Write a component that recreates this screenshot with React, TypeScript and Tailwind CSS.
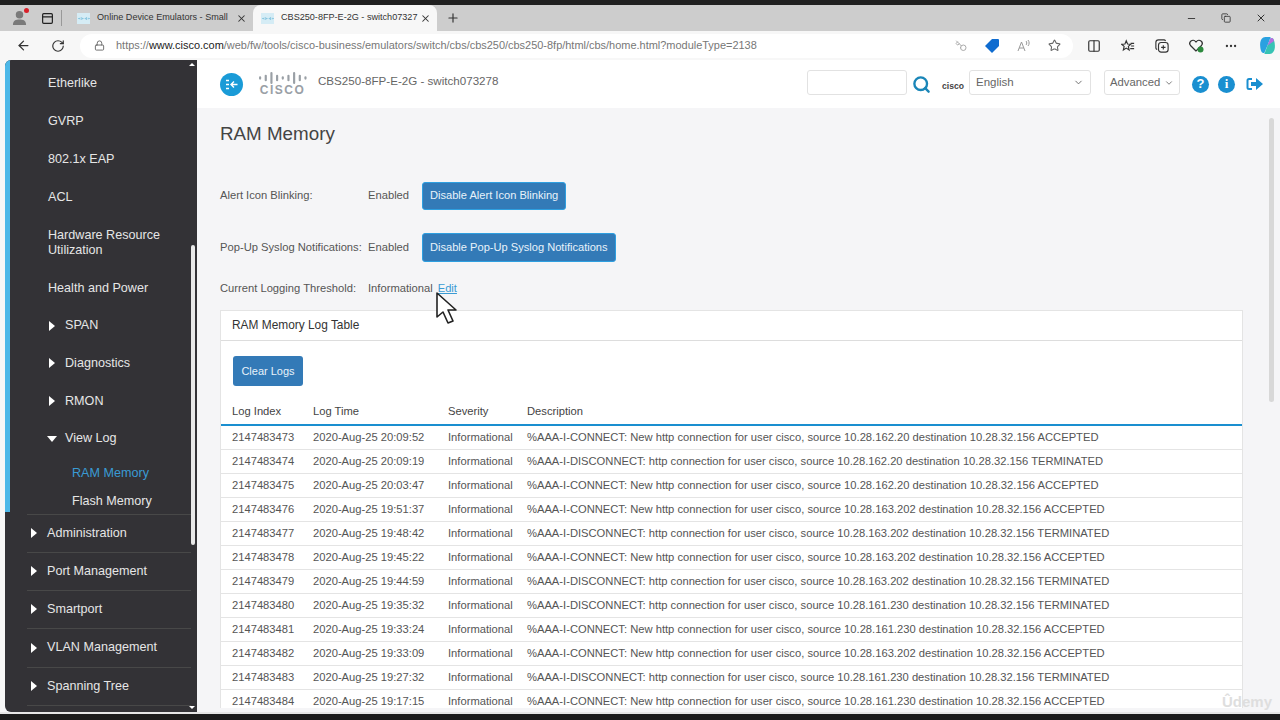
import React from "react";
import { ArrowLeft, RotateCw, Lock, X, Plus, Minus, Key, Star, Search, ChevronDown, MoreHorizontal, Columns2, PanelTop, Copy } from "lucide-react";

const rows = [
  ["2147483473","2020-Aug-25 20:09:52","%AAA-I-CONNECT: New http connection for user cisco, source 10.28.162.20 destination 10.28.32.156 ACCEPTED"],
  ["2147483474","2020-Aug-25 20:09:19","%AAA-I-DISCONNECT: http connection for user cisco, source 10.28.162.20 destination 10.28.32.156 TERMINATED"],
  ["2147483475","2020-Aug-25 20:03:47","%AAA-I-CONNECT: New http connection for user cisco, source 10.28.162.20 destination 10.28.32.156 ACCEPTED"],
  ["2147483476","2020-Aug-25 19:51:37","%AAA-I-CONNECT: New http connection for user cisco, source 10.28.163.202 destination 10.28.32.156 ACCEPTED"],
  ["2147483477","2020-Aug-25 19:48:42","%AAA-I-DISCONNECT: http connection for user cisco, source 10.28.163.202 destination 10.28.32.156 TERMINATED"],
  ["2147483478","2020-Aug-25 19:45:22","%AAA-I-CONNECT: New http connection for user cisco, source 10.28.163.202 destination 10.28.32.156 ACCEPTED"],
  ["2147483479","2020-Aug-25 19:44:59","%AAA-I-DISCONNECT: http connection for user cisco, source 10.28.163.202 destination 10.28.32.156 TERMINATED"],
  ["2147483480","2020-Aug-25 19:35:32","%AAA-I-DISCONNECT: http connection for user cisco, source 10.28.161.230 destination 10.28.32.156 TERMINATED"],
  ["2147483481","2020-Aug-25 19:33:24","%AAA-I-CONNECT: New http connection for user cisco, source 10.28.161.230 destination 10.28.32.156 ACCEPTED"],
  ["2147483482","2020-Aug-25 19:33:09","%AAA-I-CONNECT: New http connection for user cisco, source 10.28.163.202 destination 10.28.32.156 ACCEPTED"],
  ["2147483483","2020-Aug-25 19:27:32","%AAA-I-DISCONNECT: http connection for user cisco, source 10.28.161.230 destination 10.28.32.156 TERMINATED"],
  ["2147483484","2020-Aug-25 19:17:15","%AAA-I-CONNECT: New http connection for user cisco, source 10.28.161.230 destination 10.28.32.156 ACCEPTED"],
];

function Caret({ open }: { open?: boolean }) {
  return (
    <svg width="10" height="12" viewBox="0 0 10 12" className="shrink-0" fill="#fff">
      {open ? <path d="M0 3h10L5 9z" /> : <path d="M2 1l6 5-6 5z" />}
    </svg>
  );
}

function CiscoBars({ color, w }: { color: string; w: number }) {
  const hs = [3, 6, 11, 6, 3, 6, 11, 6, 3];
  return (
    <svg width={w} height={w / 4} viewBox="0 0 44 11" fill={color}>
      {hs.map((h, i) => (
        <rect key={i} x={i * 5.2} y={(11 - h) / 2} width="2" height={h} rx="1" />
      ))}
    </svg>
  );
}

function Tab({ title, active }: { title: string; active?: boolean }) {
  return (
    <div className={`flex items-center h-[26px] w-[184px] pl-[8px] pr-[6px] gap-[7px] rounded-t-[8px] ${active ? "bg-[#f7f7f7]" : ""}`}>
      <div className="w-[13px] h-[11px] bg-[#d5ecf5] flex items-center justify-center shrink-0"><CiscoBars color="#49a6cd" w={12} /></div>
      <span className="text-[9.1px] text-[#333] whitespace-nowrap flex-1 min-w-0">{title}</span>
      <X size={11} strokeWidth={2.2} className="text-[#333] shrink-0" />
    </div>
  );
}

function Nav({ label, indent, caret, open, divider, h = 37.7 }: { label: string; indent?: boolean; caret?: boolean; open?: boolean; divider?: boolean; h?: number }) {
  return (
    <div className={`flex items-center text-[12.6px] text-[#e6e6e6] ${divider ? "border-b border-[#484848] ml-[17px] mr-[6px]" : ""}`} style={{ height: h }}>
      {caret ? (
        <div className={`flex items-center gap-[8px] ${indent ? "pl-[37px]" : "pl-[2px]"}`}>
          <Caret open={open} />
          <span>{label}</span>
        </div>
      ) : (
        <span className="pl-[38px] leading-[15px]">{label}</span>
      )}
    </div>
  );
}

function Btn({ children, h }: { children: React.ReactNode; h: string }) {
  return (
    <button className={`${h} mt-[1px] px-[7px] pb-[1px] bg-[#337ab7] border border-[#2e9fe0] rounded-[3px] text-[#e8f2fa] text-[11.1px] whitespace-nowrap`}>{children}</button>
  );
}

export default function App() {
  return (
    <div className="w-[1280px] h-[720px] overflow-hidden flex flex-col bg-[#1c1c1c] font-['Liberation_Sans',sans-serif]">
      <div className="h-[5px] shrink-0 bg-[#202020]" />
      {/* tab strip */}
      <div className="h-[26px] shrink-0 bg-[#cdcdcd] flex items-center">
        <div className="w-[38px] flex justify-center relative pl-[0px]">
          <svg width="15" height="16" viewBox="0 0 16 17" fill="#7a7a7a"><circle cx="8" cy="5" r="4" /><path d="M1 16c0-5 3-6 7-6s7 1 7 6z" /></svg>
          <span className="absolute right-[9px] top-[-2px] w-[5px] h-[5px] rounded-full bg-[#d9202a]" />
        </div>
        <PanelTop size={13} strokeWidth={2.2} className="text-[#222] ml-[3px]" />
        <div className="w-px h-[16px] bg-[#999] ml-[7px] mr-[7px]" />
        <Tab title="Online Device Emulators - Small" />
        <Tab title="CBS250-8FP-E-2G - switch07327" active />
        <Plus size={14} className="text-[#333] ml-[9px]" />
        <div className="ml-auto flex items-center gap-[24px] pr-[13px] text-[#333]">
          <Minus size={11} />
          <Copy size={10} />
          <X size={12} />
        </div>
      </div>
      {/* address bar */}
      <div className="h-[29px] shrink-0 bg-[#f7f7f7] flex items-center">
        <ArrowLeft size={15} className="ml-[16px] text-[#333]" />
        <RotateCw size={14} className="ml-[20px] text-[#333]" />
        <div className="ml-[15px] w-[993px] h-[24px] bg-white rounded-full flex items-center pl-[14px]">
          <Lock size={11} className="text-[#666]" />
          <span className="ml-[11px] text-[10.96px] text-[#777] whitespace-nowrap">https://<span className="text-[#222]">www.cisco.com</span>/web/fw/tools/cisco-business/emulators/switch/cbs/cbs250/cbs250-8fp/html/cbs/home.html?moduleType=2138</span>
          <div className="ml-auto flex items-center gap-[18px] pr-[12px]">
            <Key size={12} className="text-[#aaa] -scale-x-100" />
            <svg width="14" height="14" viewBox="0 0 14 14" fill="#0f6cd0"><path d="M7 0h6a1 1 0 011 1v6l-7 7-7-7z" /></svg>
            <svg width="13" height="13" viewBox="0 0 13 13" fill="none" stroke="#999" strokeWidth="1"><path d="M1 12l3.5-9L8 12M2.2 9h4.6M9 2c1 1 1 3 0 4M11 1c1.5 2 1.5 4 0 6" /></svg>
            <Star size={13} className="text-[#666]" />
          </div>
        </div>
        <div className="flex items-center gap-[20px] ml-[14px] text-[#333]">
          <Columns2 size={14} />
          <svg width="14" height="14" viewBox="0 0 16 16" fill="none" stroke="#333" strokeWidth="1.3"><path d="M6 2l1.5 3.7 3.7.3-2.8 2.5.9 4L6 10.4 2.7 12.5l.9-4L.8 6l3.7-.3z" /><path d="M11 5h4M11.5 8H15M10.5 11H15" /></svg>
          <svg width="14" height="14" viewBox="0 0 16 16" fill="none" stroke="#333" strokeWidth="1.3"><rect x="4" y="4" width="11" height="11" rx="3" /><path d="M12 2.5A2 2 0 0010.5 1H4a3 3 0 00-3 3v6.5A2 2 0 002.5 12M9.5 7v5M7 9.5h5" /></svg>
          <svg width="15" height="15" viewBox="0 0 15 15"><path d="M7 13L1.5 7.5a3 3 0 015-4L7 4l.5-.5a3 3 0 015 4z" fill="none" stroke="#333" strokeWidth="1.2" /><circle cx="11.5" cy="11.5" r="3" fill="#2d8a3e" /></svg>
          <MoreHorizontal size={14} />
          <svg width="19" height="19" viewBox="0 0 18 18"><path d="M2 8c0-4 2-7 5-7h5l-3 8-3 7H5c-2 0-3-4-3-8z" fill="#2aa1e0" /><path d="M16 10c0 4-2 7-5 7H6l3-8 3-7h1c2 0 3 4 3 8z" fill="#37c3b4" /><path d="M9 9l3-7h1c1 0 2 1 2 3z" fill="#b66ee0" /></svg>
        </div>
      </div>
      {/* page */}
      <div className="h-[652px] shrink-0 bg-[#f7f7f7] pl-[5px]">
        <div className="h-[652px] bg-[#f5f5f7] flex overflow-hidden rounded-tl-[6px] relative">
          {/* sidebar */}
          <div className="w-[192px] shrink-0 bg-[#333236] flex relative rounded-bl-[6px]">
            <div className="w-[5px] h-[452px] bg-[#4db8e8]" />
            <div className="flex-1 flex flex-col pt-[5px] min-w-0">
              <Nav label="Etherlike" />
              <Nav label="GVRP" />
              <Nav label="802.1x EAP" h={38} />
              <Nav label="ACL" h={38} />
              <div className="h-[53px] flex items-center text-[12.6px] text-[#e6e6e6]"><span className="pl-[38px] leading-[15px]">Hardware Resource<br />Utilization</span></div>
              <Nav label="Health and Power" h={37.5} />
              <Nav label="SPAN" caret indent />
              <Nav label="Diagnostics" caret indent />
              <Nav label="RMON" caret indent />
              <Nav label="View Log" caret indent open />
              <div className="h-[32px] flex items-center pl-[62px] text-[12.6px] text-[#3a9bd4]">RAM Memory</div>
              <div className="h-[25px] flex items-center pl-[45px] ml-[17px] text-[12.6px] text-[#e6e6e6] border-b border-[#484848] mr-[6px]">Flash Memory</div>
              <Nav label="Administration" caret divider h={38} />
              <Nav label="Port Management" caret divider h={38} />
              <Nav label="Smartport" caret divider h={38.5} />
              <Nav label="VLAN Management" caret divider h={38.5} />
              <Nav label="Spanning Tree" caret divider h={38.5} />
            </div>
            <div className="absolute right-[2px] top-[185px] w-[4px] h-[300px] bg-[#e8e8e8] rounded-full" />
            <div className="absolute right-[2px] top-[3px] w-0 h-0 border-x-[3px] border-x-transparent border-b-[3px] border-b-white" />
            <div className="absolute right-[2px] bottom-[3px] w-0 h-0 border-x-[3px] border-x-transparent border-t-[3px] border-t-white" />
          </div>
          {/* main */}
          <div className="flex-1 flex flex-col min-w-0">
            <div className="h-[48px] shrink-0 bg-white flex items-center">
              <div className="w-[23px] h-[23px] ml-[23px] rounded-full bg-[#1a9bd7] flex items-center justify-center">
                <svg width="13" height="11" viewBox="0 0 13 11" fill="none" stroke="#fff" strokeWidth="1.4"><path d="M1 1.5h3M1 5.5h3M1 9.5h3M12.5 5.5H6M9 2.5l-3 3 3 3" /></svg>
              </div>
              <div className="ml-[15px] flex flex-col items-center w-[49px]">
                <CiscoBars color="#9aa0a6" w={48} />
                <span className="text-[12px] font-bold tracking-[1.5px] text-[#9aa0a6] leading-[13px]">CISCO</span>
              </div>
              <span className="ml-[11px] text-[11.6px] text-[#666] whitespace-nowrap -mt-[7px]">CBS250-8FP-E-2G - switch073278</span>
              <div className="ml-auto flex items-center pr-[17px]">
                <div className="w-[100px] h-[25px] -mt-[3px] bg-white border border-[#e2e2e2] rounded-[3px]" />
                <Search size={19} strokeWidth={3} className="ml-[5px] text-[#1a86b8]" />
                <span className="ml-[11px] text-[8.6px] font-bold text-[#444] w-[21px] mt-[4px]">cisco</span>
                <div className="ml-[6px] w-[122px] h-[25px] -mt-[3px] bg-white border border-[#e2e2e2] rounded-[3px] flex items-center justify-between px-[6px] text-[11.5px] text-[#666]">English<ChevronDown size={11} /></div>
                <div className="ml-[13px] w-[76px] h-[25px] -mt-[3px] bg-white border border-[#e2e2e2] rounded-[3px] flex items-center justify-between px-[5px] text-[11.3px] text-[#666]">Advanced<ChevronDown size={10} /></div>
                <div className="ml-[12px] w-[17px] h-[17px] rounded-full bg-[#1a8fd0] text-white text-[13px] font-bold flex items-center justify-center">?</div>
                <div className="ml-[9px] w-[17px] h-[17px] rounded-full bg-[#1a8fd0] text-white text-[13px] font-bold flex items-center justify-center font-['Liberation_Serif',serif]">i</div>
                <svg width="17" height="14" viewBox="0 0 17 14" className="ml-[11px]"><path d="M6 2H3a1.5 1.5 0 00-1.5 1.5v7A1.5 1.5 0 003 12h3" fill="none" stroke="#1a8fd0" strokeWidth="2" /><path d="M5 5h5V1l7 6-7 6V9H5z" fill="#1a8fd0" /></svg>
              </div>
            </div>
            <div className="flex-1 mb-[4px] pl-[23px] pr-[37px] flex flex-col min-h-0 overflow-hidden">
              <h1 className="h-[51px] mt-[1px] flex items-center text-[18.8px] text-[#444] shrink-0">RAM Memory</h1>
              <div className="h-[40px] mt-[15px] flex items-center text-[11.2px] text-[#555] shrink-0">
                <span className="w-[148px]">Alert Icon Blinking:</span>
                <span className="w-[54px]">Enabled</span>
                <Btn h="h-[28px]">Disable Alert Icon Blinking</Btn>
              </div>
              <div className="h-[40px] mt-[12px] flex items-center text-[11.2px] text-[#555] shrink-0">
                <span className="w-[148px]">Pop-Up Syslog Notifications:</span>
                <span className="w-[54px]">Enabled</span>
                <Btn h="h-[29px]">Disable Pop-Up Syslog Notifications</Btn>
              </div>
              <div className="h-[20px] mt-[11px] flex items-center text-[11.2px] text-[#555] shrink-0">
                <span className="w-[148px]">Current Logging Threshold:</span>
                <span>Informational</span>
                <a className="ml-[5px] text-[#3a9bd4] underline">Edit</a>
              </div>
              <div className="mt-[12px] bg-white border border-[#e4e4e4] flex flex-col shrink-0">
                <div className="h-[30px] flex items-center pl-[11px] border-b border-[#ddd] text-[11.9px] text-[#333]">RAM Memory Log Table</div>
                <div className="pl-[12px] pt-[15px]"><button className="h-[30px] w-[70px] bg-[#337ab7] rounded-[3px] text-[#e8f2fa] text-[11px]">Clear Logs</button></div>
                <div className="h-[29px] mt-[11px] pt-[2px] flex items-center text-[11.2px] text-[#444] border-b-2 border-[#1a8fd0]">
                  <span className="w-[81px] pl-[11px] box-content">Log Index</span>
                  <span className="w-[135px]">Log Time</span>
                  <span className="w-[79px]">Severity</span>
                  <span>Description</span>
                </div>
                {rows.map((r) => (
                  <div key={r[0]} className="h-[24px] shrink-0 flex items-center text-[11.2px] text-[#555] border-b border-[#e4e4e4] whitespace-nowrap">
                    <span className="w-[81px] pl-[11px] box-content">{r[0]}</span>
                    <span className="w-[135px]">{r[1]}</span>
                    <span className="w-[79px]">Informational</span>
                    <span>{r[2]}</span>
                  </div>
                ))}
              </div>
            </div>
          </div>
          <div className="absolute right-[6px] top-[58px] w-[5px] h-[284px] bg-[#d8d8d8] rounded-full" />
          {/* cursor */}
          <svg width="24" height="34" viewBox="0 0 24 34" className="absolute left-[430px] top-[232px]">
            <path d="M2 1v24l6-5 5 11 5-2-5-11h8z" fill="#fff" stroke="#222" strokeWidth="1.6" strokeLinejoin="round" />
          </svg>
          <span className="absolute right-[8px] bottom-[-1px] text-[15px] font-bold text-[#dedede]">Ûdemy</span>
        </div>
      </div>
      <div className="h-[2px] shrink-0 bg-[#e6e6e6]" />
      <div className="flex-1 bg-[#1c1c1c]" />
    </div>
  );
}
